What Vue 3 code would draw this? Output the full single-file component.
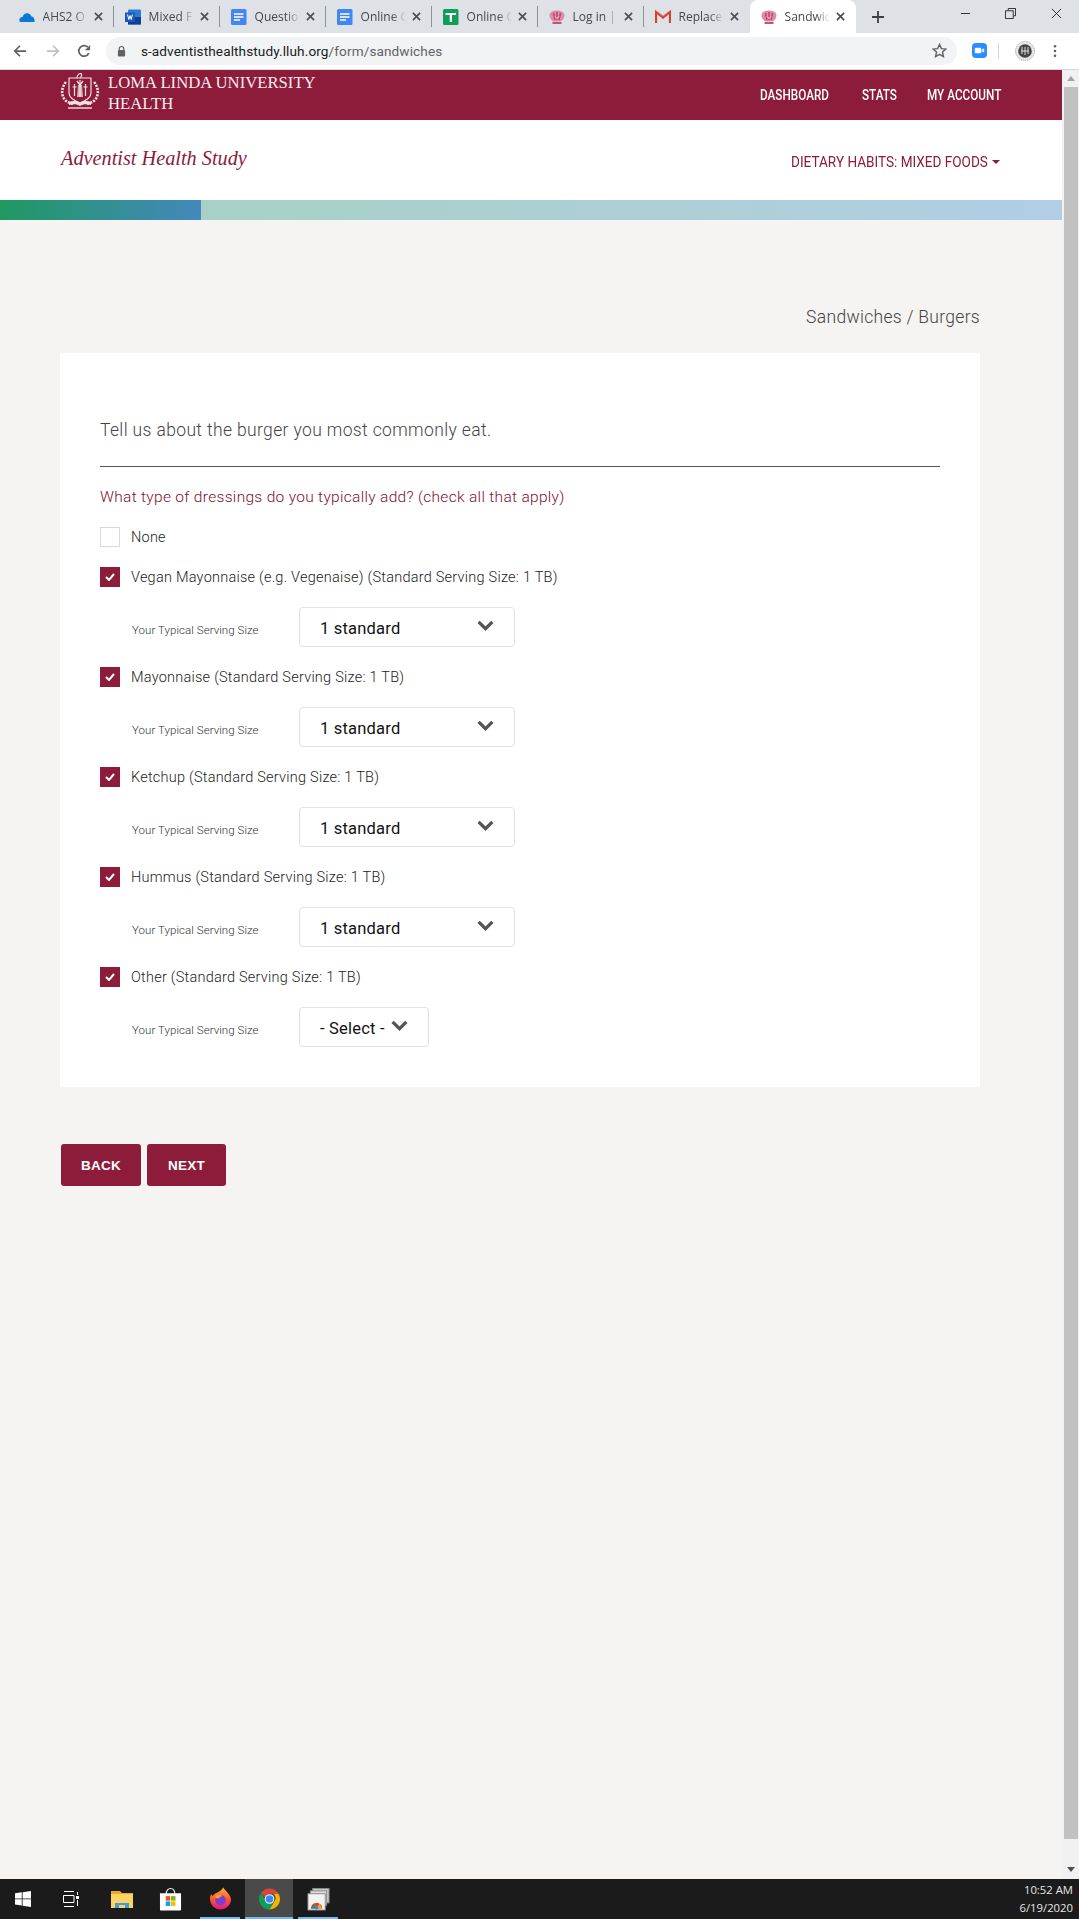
<script setup>
const tabs = [
  { icon: 'cloud', label: 'AHS2 O', sep: true },
  { icon: 'word', label: 'Mixed F', sep: true },
  { icon: 'docs', label: 'Questio', sep: true },
  { icon: 'docs', label: 'Online C', sep: true },
  { icon: 'sheet', label: 'Online C', sep: true },
  { icon: 'crown', label: 'Log in |', sep: true },
  { icon: 'gmail', label: 'Replace' },
  { icon: 'crown', label: 'Sandwic', active: true },
]
const items = [
  { label: 'Vegan Mayonnaise (e.g. Vegenaise) (Standard Serving Size: 1 TB)', value: '1 standard' },
  { label: 'Mayonnaise (Standard Serving Size: 1 TB)', value: '1 standard' },
  { label: 'Ketchup (Standard Serving Size: 1 TB)', value: '1 standard' },
  { label: 'Hummus (Standard Serving Size: 1 TB)', value: '1 standard' },
  { label: 'Other (Standard Serving Size: 1 TB)', value: '- Select -', short: true },
]
</script>

<template>
  <div class="screen">
    <!-- browser tab strip -->
    <div class="tabstrip">
      <div v-for="(t, i) in tabs" :key="i" class="tab" :class="{ active: t.active, sep: t.sep }">
        <svg class="fav" viewBox="0 0 16 16">
          <template v-if="t.icon === 'cloud'">
            <path d="M1 13c-1.500-2.500 0-5 2.500-5C4.500 5 7 3.500 9.500 4.500c1.500.5 2.500 1.500 3 3C14.500 7.500 16 10 15.500 13z" fill="#0a78d4" />
          </template>
          <template v-else-if="t.icon === 'word'">
            <rect x="3" y="0.500" width="13" height="15" rx="1" fill="#2b7cd3" />
            <rect x="3" y="8" width="13" height="7.500" fill="#103f91" />
            <rect x="0" y="3.500" width="10" height="9.500" fill="#185abd" />
            <path d="M1.500 5.500l1.300 5 1.200-4 1.200 4 1.300-5" fill="none" stroke="#fff" stroke-width="1" transform="translate(1 0)" />
          </template>
          <template v-else-if="t.icon === 'docs'">
            <rect x="0" y="0" width="15.500" height="16" rx="1.500" fill="#4285f4" />
            <path d="M3 5h9.500M3 8h9.500M3 11h6" stroke="#fff" stroke-width="1.600" />
          </template>
          <template v-else-if="t.icon === 'sheet'">
            <rect x="0" y="0" width="15.500" height="16" rx="1.500" fill="#0f9d58" />
            <path d="M2.500 5h10.500M7.800 5v8" stroke="#fff" stroke-width="2.200" />
          </template>
          <template v-else-if="t.icon === 'gmail'">
            <path d="M1 14V3l7 5.500L15 3v11" fill="none" stroke="#d8412f" stroke-width="2.200" stroke-linejoin="miter" />
            <path d="M3 3l5 4 5-4" fill="none" stroke="#ea8b7f" stroke-width="1" />
          </template>
          <template v-else>
            <path d="M.5 6.500C.5 3 4 1.500 8 1.500s7.500 1.500 7.500 5c0 3-2.500 5-3.500 6H4c-1-1-3.500-3-3.500-6z" fill="#dd8ca8" />
            <path d="M4.500 4l1.500 7M11.500 4L10 11M8 3v8" stroke="#b93e68" stroke-width="1.300" />
            <path d="M6 7.500l2 2 2-2" fill="none" stroke="#f9e3ea" stroke-width="1" />
            <path d="M3.500 14h9" stroke="#c4527c" stroke-width="2" />
          </template>
        </svg>
        <span class="tab-label">{{ t.label }}</span>
        <svg class="tab-x" viewBox="0 0 10 10"><path d="M1 1l8 8M9 1l-8 8" stroke="#4a4d52" stroke-width="1.800" /></svg>
      </div>
      <svg class="plus" viewBox="0 0 12 12"><path d="M6 0v12M0 6h12" stroke="#3c4043" stroke-width="1.800" /></svg>
      <div class="winctl">
        <svg viewBox="0 0 12 12"><path d="M1 6h10" stroke="#222" stroke-width="1" /></svg>
        <svg viewBox="0 0 12 12"><path d="M3.500 2.500v-2h8v8h-2M.5 3h8.500v8.500H.5z" fill="none" stroke="#222" stroke-width="1" /></svg>
        <svg viewBox="0 0 12 12"><path d="M1 1l10 10M11 1L1 11" stroke="#222" stroke-width="1" /></svg>
      </div>
    </div>

    <!-- browser toolbar -->
    <div class="toolbar">
      <svg class="tb-ic back" viewBox="0 0 16 16"><path d="M15 8H2M8 2L2 8l6 6" fill="none" stroke="#5f6368" stroke-width="2" /></svg>
      <svg class="tb-ic fwd" viewBox="0 0 16 16"><path d="M1 8h13M8 2l6 6-6 6" fill="none" stroke="#bdc1c6" stroke-width="2" /></svg>
      <svg class="tb-ic reload" viewBox="0 0 16 16"><path d="M13.500 10.500A6 6 0 1 1 12.300 3.700" fill="none" stroke="#5f6368" stroke-width="2" /><path d="M15 1v6H9z" fill="#5f6368" /></svg>
      <div class="omnibox">
        <svg class="lock" viewBox="0 0 10 12"><path d="M2.500 5V3.500a2.500 2.500 0 0 1 5 0V5" fill="none" stroke="#5f6368" stroke-width="1.300" /><rect x="1" y="5" width="8" height="7" rx="1" fill="#5f6368" /></svg>
        <span class="url"><span class="url-host">s-adventisthealthstudy.lluh.org</span>/form/sandwiches</span>
        <svg class="star" viewBox="0 0 16 16"><path d="M8 1.500l2 4.500 4.800.5-3.600 3.200 1 4.800L8 12.100l-4.200 2.400 1-4.800L1.200 6.500 6 6z" fill="none" stroke="#5f6368" stroke-width="1.500" /></svg>
      </div>
      <div class="ext-zoom">
        <svg viewBox="0 0 16 16"><rect width="16" height="16" rx="4" fill="#2d8cff" /><rect x="3" y="5" width="7" height="6" rx="1.200" fill="#fff" /><path d="M10.500 7.500L13 5.500v5l-2.500-2z" fill="#fff" /></svg>
      </div>
      <div class="ext-div"></div>
      <svg class="avatar" viewBox="0 0 20 20"><circle cx="10" cy="10" r="9.500" fill="#e7e7e7" stroke="#999" stroke-width="1" stroke-dasharray="1 1" /><circle cx="10" cy="10" r="6.800" fill="#444" /><path d="M7 6v7M10 6v8M13 6v7M6 10h8" stroke="#ddd" stroke-width="1" /></svg>
      <svg class="dots" viewBox="0 0 4 16"><circle cx="2" cy="2.500" r="1.500" fill="#5f6368" /><circle cx="2" cy="8" r="1.500" fill="#5f6368" /><circle cx="2" cy="13.500" r="1.500" fill="#5f6368" /></svg>
    </div>

    <div class="viewport">
      <div class="page">
        <header class="mainbar">
          <div class="brand">
            <svg class="crest" viewBox="0 0 40 36">
              <g fill="none" stroke="#f1dfe4" stroke-width="2.600" stroke-dasharray="2.200 1.100">
                <path d="M6 9C1 15 1 22 5 27c2 2 5 3 8 4" />
                <path d="M34 9c5 6 5 13 1 18-2 2-5 3-8 4" />
              </g>
              <g fill="none" stroke="#f1dfe4">
                <path d="M9 5h22v15c0 5-6 8-11 10-5-2-11-5-11-10z" stroke-width="1.200" />
                <path d="M20 7v17M14.500 11v12M25.500 11v12M12.500 14h4M23.500 14h4" stroke-width="1.200" />
                <path d="M17 8l3 4 3-4" stroke-width="1.400" />
                <path d="M17 5c0-3 2-4.500 4-4.500 1 1 .5 3-1 4.500" stroke-width="1.200" />
              </g>
              <path d="M18 12h4l1 12h-6z" fill="#f1dfe4" opacity=".75" />
              <path d="M9 29c4-1.500 8-1 11 .5 3-1.500 7-2 11-.5v3c-4-1-8-1-11 1-3-2-7-2-11-1z" fill="#f1dfe4" />
              <path d="M8 35h24" stroke="#f1dfe4" stroke-width="1.400" />
            </svg>
            <div class="brand-text">LOMA LINDA UNIVERSITY<br />HEALTH</div>
          </div>
          <nav class="mainnav">
            <a class="nav-dash"><span>DASHBOARD</span></a>
            <a class="nav-stats"><span>STATS</span></a>
            <a class="nav-acct"><span>MY ACCOUNT</span></a>
          </nav>
        </header>

        <div class="subbar">
          <div class="study">Adventist Health Study</div>
          <div class="section"><span class="section-text">DIETARY HABITS: MIXED FOODS</span><span class="caret"></span></div>
        </div>

        <div class="progress">
          <div class="progress-done"></div>
          <div class="progress-rest"></div>
        </div>

        <main class="content">
          <div class="crumb">Sandwiches / Burgers</div>
          <section class="card">
            <h1 class="lead">Tell us about the burger you most commonly eat.</h1>
            <hr class="rule" />
            <p class="question">What type of dressings do you typically add? (check all that apply)</p>
            <div class="check-row">
              <span class="box"></span>
              <span class="check-label">None</span>
            </div>
            <template v-for="item in items" :key="item.label">
              <div class="check-row">
                <span class="box on">
                  <svg viewBox="0 0 10 8"><path d="M1 4l3 3 5-6" fill="none" stroke="#fff" stroke-width="2" /></svg>
                </span>
                <span class="check-label">{{ item.label }}</span>
              </div>
              <div class="serving">
                <span class="serving-label">Your Typical Serving Size</span>
                <div class="select" :class="{ short: item.short }">
                  <span class="select-value">{{ item.value }}</span>
                  <svg viewBox="0 0 16 10"><path d="M1.500 1.500L8 8l6.500-6.500" fill="none" stroke="#555" stroke-width="3" /></svg>
                </div>
              </div>
            </template>
          </section>
          <div class="actions">
            <button class="btn back-btn">BACK</button>
            <button class="btn next-btn">NEXT</button>
          </div>
        </main>
      </div>
      <div class="scrollbar">
        <span class="arrow up"></span>
        <div class="thumb"></div>
        <span class="arrow down"></span>
      </div>
    </div>

    <!-- windows taskbar -->
    <footer class="taskbar">
      <div class="task-icons">
        <div class="task t-start">
          <svg viewBox="0 0 16 16"><path d="M0 2.300l6.800-1v6.200H0zM7.600 1.200L16 0v7.500H7.600zM0 8.300h6.800v6.200L0 13.600zM7.600 8.300H16V16l-8.400-1.200z" fill="#fff" /></svg>
        </div>
        <div class="task t-view">
          <svg viewBox="0 0 16 16"><path d="M1 .5h10M1 15.500h10M.5 4.500h10.500v7H.5zM14.500 1v3M14.500 9v6" fill="none" stroke="#fff" stroke-width="1" /><rect x="13" y="5" width="3" height="3" fill="#fff" /></svg>
        </div>
        <div class="task t-files">
          <svg viewBox="0 0 22 18"><path d="M0 1h9l2 2h11v15H0z" fill="#e6ab2e" /><rect x="0" y="4" width="22" height="14" fill="#fcd462" /><path d="M4 18v-5h14v5h-4v-3H8v3z" fill="#3b9ee0" /></svg>
        </div>
        <div class="task t-store">
          <svg viewBox="0 0 24 24"><path d="M7.500 7c0-8 9-8 9 0" fill="none" stroke="#eee" stroke-width="1.200" /><path d="M1 6h22v17a1 1 0 0 1-1 1H2a1 1 0 0 1-1-1z" fill="#fff" /><rect x="7" y="9" width="4.700" height="4.700" fill="#f25022" /><rect x="12.500" y="9" width="4.700" height="4.700" fill="#7fba00" /><rect x="7" y="14.500" width="4.700" height="4.700" fill="#00a4ef" /><rect x="12.500" y="14.500" width="4.700" height="4.700" fill="#ffb900" /></svg>
        </div>
        <div class="task t-fox running">
          <svg viewBox="0 0 24 24"><defs><linearGradient id="fx" x1="0" y1="0" x2="0" y2="1"><stop offset="0" stop-color="#ffb52c" /><stop offset=".5" stop-color="#ff5a2c" /><stop offset="1" stop-color="#e31587" /></linearGradient></defs><path d="M12 23A11 11 0 0 1 1 12c0-2 .5-4 1.500-5l1.500 2c1-2 2.500-3 4.500-3.500C11 4 13 3 15 0c1 2 2 2.500 4 5 3 3.500 4 6 4 8a11 11 0 0 1-11 10z" fill="url(#fx)" /><circle cx="12" cy="13" r="5.500" fill="#7b3cd6" /><path d="M6 10c2-3 6-3 8-1-2 0-3 1-3 2-2 1-4 0-5-1z" fill="#ff9a2c" /></svg>
        </div>
        <div class="task t-chrome active running">
          <svg viewBox="0 0 24 24"><path d="M12 1a11 11 0 0 1 9.500 5.500H12a5.500 5.500 0 0 0-5.200 3.700L3.200 5.500A11 11 0 0 1 12 1z" fill="#db4437" /><path d="M21.500 6.500A11 11 0 0 1 12 23l4.800-8.200a5.500 5.500 0 0 0-.7-8.300z" fill="#f4b400" /><path d="M12 23A11 11 0 0 1 3.200 5.500l4.600 8a5.500 5.500 0 0 0 9 1.300z" fill="#0f9d58" /><circle cx="12" cy="12" r="5" fill="#fff" /><circle cx="12" cy="12" r="4" fill="#4285f4" /></svg>
        </div>
        <div class="task t-stack running">
          <svg viewBox="0 0 24 24"><rect x="6" y="1" width="17" height="15" fill="#c9c9c9" stroke="#8b8b8b" /><rect x="3.500" y="3.500" width="17" height="15" fill="#dcdcdc" stroke="#8b8b8b" /><rect x="1" y="6.500" width="18" height="17" fill="#f3f3f3" stroke="#8b8b8b" /><path d="M4 22a6 6 0 0 1 12 0z" fill="#db4437" /><path d="M10 22l3-5 3 5z" fill="#f4b400" /><path d="M4 22l3-4 3 4z" fill="#0f9d58" /><circle cx="10" cy="21" r="2" fill="#4285f4" /></svg>
        </div>
      </div>
      <div class="clock">
        <div>10:52 AM</div>
        <div>6/19/2020</div>
      </div>
    </footer>
  </div>
</template>

<style>
html, body { margin: 0; padding: 0; background: #f5f4f2; }
</style>

<style scoped>
* { box-sizing: border-box; }
.screen {
  width: 1079px;
  height: 1919px;
  display: flex;
  flex-direction: column;
  overflow: hidden;
  font-family: Roboto, "Liberation Sans", sans-serif;
  background: #f5f4f2;
}

/* tab strip */
.tabstrip {
  height: 33px;
  flex: none;
  background: #dee1e6;
  display: flex;
  align-items: stretch;
  padding-left: 7.6px;
}
.tab {
  width: 106px;
  height: 33px;
  flex: none;
  display: flex;
  align-items: center;
  padding-left: 11px;
  position: relative;
  font-size: 12px;
  color: #45494e;
}
.tab.sep::after {
  content: "";
  position: absolute;
  right: 0;
  top: 6px;
  bottom: 6px;
  width: 1px;
  background: #8e9196;
}
.tab.active {
  background: #fff;
  border-radius: 8px 8px 0 0;
}
.fav { width: 16px; height: 16px; flex: none; }
.tab-label {
  margin-left: 8px;
  width: 50px;
  flex: none;
  overflow: hidden;
  white-space: nowrap;
  font-family: "Open Sans", sans-serif;
  -webkit-mask-image: linear-gradient(90deg, #000 62%, transparent 90%);
  mask-image: linear-gradient(90deg, #000 62%, transparent 90%);
}
.tab-x { width: 9px; height: 9px; margin-left: 1px; flex: none; }
.plus { width: 12px; height: 12px; align-self: center; margin-left: 16px; flex: none; }
.winctl {
  margin-left: auto;
  display: flex;
  align-items: flex-start;
  gap: 34.500px;
  padding: 8px 17.500px 0 0;
}
.winctl svg { width: 11px; height: 11px; }

/* toolbar */
.toolbar {
  height: 37px;
  flex: none;
  background: #fff;
  border-bottom: 1px solid #d5d7da;
  display: flex;
  align-items: center;
  padding-bottom: 1px;
}
.tb-ic { width: 14px; height: 14px; flex: none; }
.back { margin-left: 13px; }
.fwd { margin-left: 18.600px; }
.reload { margin-left: 17.800px; }
.omnibox {
  margin-left: 15px;
  width: 850.500px;
  height: 28px;
  background: #f1f3f4;
  border-radius: 14px;
  display: flex;
  align-items: center;
  padding-left: 11px;
  flex: none;
}
.lock { width: 9px; height: 12px; flex: none; }
.url {
  margin-left: 14.500px;
  font-size: 13.600px;
  letter-spacing: .1px;
  color: #5f6368;
  white-space: nowrap;
}
.url-host { color: #202124; }
.star { width: 15px; height: 15px; margin-left: auto; margin-right: 9.500px; }
.ext-zoom { margin-left: 15.500px; width: 15px; height: 15px; display: flex; flex: none; }
.ext-zoom svg { width: 15px; height: 15px; }
.ext-div { width: 1px; height: 16px; background: #d5d7da; margin-left: 10.500px; flex: none; }
.avatar { width: 20px; height: 20px; margin-left: 16px; flex: none; }
.dots { width: 4px; height: 14px; margin-left: 18px; flex: none; }

/* page */
.viewport { flex: 1; display: flex; min-height: 0; }
.page { flex: 1; min-width: 0; background: #f5f4f2; }
.mainbar {
  height: 50px;
  background: #8c1c3a;
  display: flex;
  align-items: center;
  justify-content: space-between;
  padding: 0 62px 0 60px;
  color: #fff;
}
.brand { display: flex; align-items: flex-start; align-self: flex-start; }
.crest { width: 40px; height: 36px; margin-top: 3px; flex: none; }
.brand-text {
  margin-left: 8px;
  margin-top: 2px;
  font-family: "Liberation Serif", serif;
  font-size: 16.700px;
  line-height: 21px;
  color: #f7ecef;
}
.mainnav { display: flex; gap: 32px; margin-top: 2px; }
.mainnav a {
  display: block;
  height: 18px;
  font-weight: 500;
  font-size: 14.500px;
  line-height: 18px;
  color: #fff;
  white-space: nowrap;
}
.mainnav span { display: inline-block; transform: scaleX(.81); transform-origin: left center; }
.nav-dash { width: 70px; }
.nav-stats { width: 33px; }
.nav-acct { width: 73px; }
.subbar {
  height: 80px;
  background: #fff;
  display: flex;
  justify-content: space-between;
  align-items: flex-start;
  padding: 26px 62px 0 61px;
}
.study {
  font-family: "Liberation Serif", serif;
  font-style: italic;
  font-size: 20.300px;
  line-height: 24px;
  color: #8c1c3a;
}
.section {
  margin-top: 6px;
  line-height: 20px;
  color: #8c1c3a;
  display: flex;
  align-items: center;
}
.section-text {
  display: block;
  width: 196px;
  font-size: 15.500px;
  white-space: nowrap;
  transform: scaleX(.875);
  transform-origin: left center;
}
.caret {
  margin-left: 5px;
  width: 0;
  height: 0;
  border-left: 4.500px solid transparent;
  border-right: 4.500px solid transparent;
  border-top: 4.500px solid #8c1c3a;
}
.progress { height: 20px; display: flex; }
.progress-done { width: 201px; background: linear-gradient(90deg, #1f9862, #4488bd); }
.progress-rest { flex: 1; background: linear-gradient(90deg, #a7d1c6, #b1cee4); }

.content { padding: 87px 82px 0 60px; }
.crumb {
  text-align: right;
  font-size: 17.500px;
  font-weight: 300;
  line-height: 20px;
  letter-spacing: .3px;
  color: #444;
}
.card {
  margin-top: 26px;
  background: #fff;
  padding: 65px 40px 40px 40px;
}
.lead {
  margin: 0;
  font-size: 17.500px;
  font-weight: 300;
  line-height: 24px;
  letter-spacing: .36px;
  color: #444;
}
.rule { margin: 24px 0 0; border: 0; height: 1px; background: #555; }
.question {
  margin: 20px 0 0;
  font-size: 15.500px;
  font-weight: 300;
  line-height: 20px;
  letter-spacing: .31px;
  color: #7d1030;
}
.check-row {
  margin-top: 20px;
  height: 20px;
  display: flex;
  align-items: center;
}
.box {
  width: 20px;
  height: 20px;
  flex: none;
  border: 1px solid #d9d9d9;
  background: #fff;
  display: flex;
  align-items: center;
  justify-content: center;
}
.box.on { background: #8c1c3a; border-color: #8c1c3a; }
.box svg { width: 10px; height: 8px; }
.check-label {
  margin-left: 11px;
  font-size: 14.500px;
  font-weight: 300;
  letter-spacing: .24px;
  color: #222;
}
.serving {
  margin-top: 20px;
  height: 40px;
  display: flex;
  align-items: center;
  padding-left: 32px;
}
.serving-label {
  width: 167px;
  flex: none;
  margin-top: 5px;
  font-size: 11.500px;
  font-weight: 300;
  letter-spacing: .05px;
  color: #333;
}
.select {
  width: 216px;
  height: 40px;
  border: 1px solid #e2e2e2;
  border-radius: 4px;
  background: #fff;
  display: flex;
  align-items: center;
  justify-content: space-between;
  padding: 2px 20px 0 20px;
  font-size: 16.500px;
  letter-spacing: .2px;
  color: #111;
}
.select.short { width: 130px; }
.select-value { white-space: nowrap; }
.select svg { width: 17px; height: 11px; margin-top: -5px; flex: none; }
.actions { margin-top: 57px; display: flex; gap: 6px; padding-left: 1px; }
.btn {
  height: 42px;
  border: 0;
  border-radius: 3px;
  background: #8c1c3a;
  color: #fff;
  font-family: "Liberation Sans", sans-serif;
  font-weight: 700;
  font-size: 13.500px;
  letter-spacing: .2px;
  padding: 1px 0 0;
}
.back-btn { width: 80px; }
.next-btn { width: 79px; }

/* scrollbar */
.scrollbar {
  width: 17px;
  flex: none;
  background: #f1f1f1;
  display: flex;
  flex-direction: column;
  align-items: center;
  padding-top: 6px;
}
.thumb { width: 14px; flex: 1; background: #c1c1c1; margin: 6px 0 28px; }
.arrow {
  width: 0;
  height: 0;
  border-left: 4px solid transparent;
  border-right: 4px solid transparent;
  flex: none;
}
.arrow.up { border-bottom: 5px solid #a3a3a3; }
.arrow.down { border-top: 5px solid #505050; margin-bottom: 7px; }

/* taskbar */
.taskbar {
  height: 40px;
  flex: none;
  background: #1b1b1b;
  display: flex;
  justify-content: space-between;
}
.task-icons { display: flex; }
.task {
  height: 40px;
  width: 48px;
  display: flex;
  align-items: center;
  justify-content: center;
  position: relative;
  flex: none;
}
.t-start { margin-left: -1px; }
.t-start svg { width: 16px; height: 16px; }
.t-view svg { width: 16px; height: 16px; }
.t-files svg { width: 22px; height: 18px; }
.t-store svg, .t-fox svg, .t-chrome svg, .t-stack svg { width: 23px; height: 24px; }
.t-files { margin-left: 3px; }
.t-fox { margin-left: 2px; }
.t-chrome { margin-left: 1px; }
.t-stack { margin-left: 1px; }
.task.active { background: #4a4a4a; }
.task.running::after {
  content: "";
  position: absolute;
  left: 4px;
  right: 4px;
  bottom: 0;
  height: 2px;
  background: #76b9ed;
}
.task.active.running::after { left: 0; right: 0; }
.clock {
  padding: 2px 6px 0 0;
  font-family: "Open Sans", sans-serif;
  font-size: 11.300px;
  line-height: 18px;
  color: #e6e6e6;
  text-align: right;
}
</style>
